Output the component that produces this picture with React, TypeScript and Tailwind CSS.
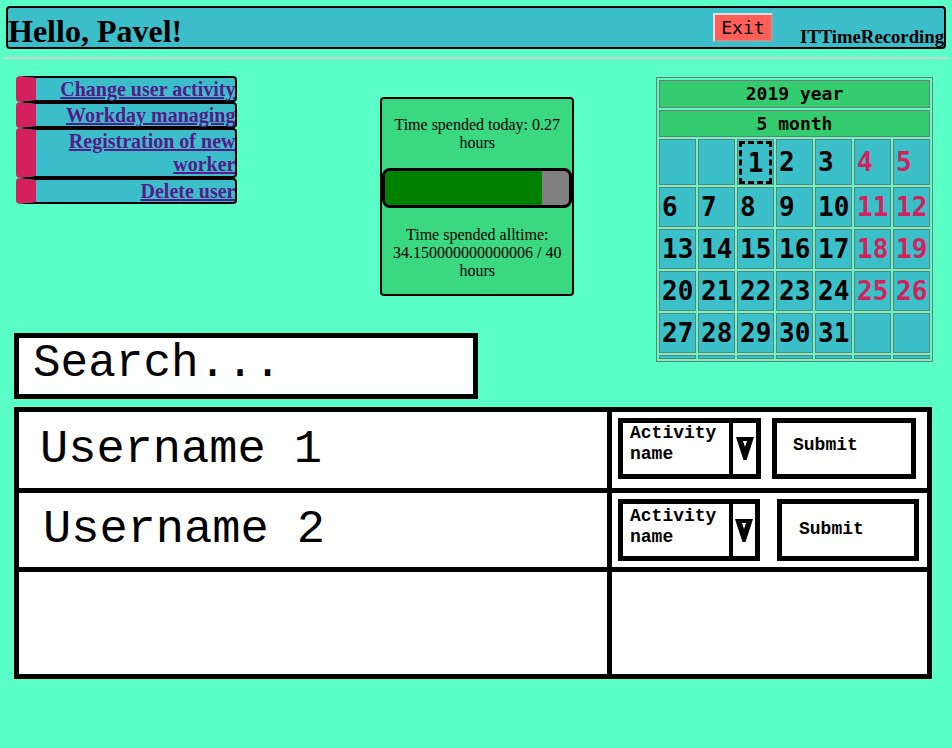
const serif = "font-['Liberation_Serif',serif]";
const mono = "font-['Liberation_Mono',monospace]";
const dmono = "font-['DejaVu_Sans_Mono',monospace]";

const menu = ["Change user activity", "Workday managing", "Registration of new worker", "Delete user"];

// calendar weeks, 0 = empty
const weeks = [
  [0, 0, 1, 2, 3, 4, 5],
  [6, 7, 8, 9, 10, 11, 12],
  [13, 14, 15, 16, 17, 18, 19],
  [20, 21, 22, 23, 24, 25, 26],
  [27, 28, 29, 30, 31, 0, 0],
];

const users = [
  { name: "Username 1", pad: "pl-[21px]", h: "h-[76px]", gap: "gap-[11px]", sel: "w-[143px] h-[61px]", selPt: "pt-0", sub: "w-[144px] h-[61px] pl-[16px] pt-[12px]" },
  { name: "Username 2", pad: "pl-[24px]", h: "h-[74px]", gap: "gap-[17px]", sel: "w-[142px] h-[62px]", selPt: "pt-[2px]", sub: "w-[142px] h-[62px] pl-[17px] pt-[15px]" },
];

const Arrow = () => (
  <svg width="18" height="23" viewBox="0 0 18 23">
    <path d="M0 0H18L10.5 23H7.5Z" fill="black" />
    <path d="M7 4H11L9 10Z" fill="white" />
  </svg>
);

const Calendar = () => {
  return (
    <table className={`border-separate border-spacing-[2px] border border-[#777] ${dmono}`}>
      <tbody>
        <tr>
          <td colSpan={7} className="p-0 border border-[#777] bg-[#33cc6e]">
            <div className="h-[26px] leading-[26px] text-center text-[18px] font-bold">2019 year</div>
          </td>
        </tr>
        <tr>
          <td colSpan={7} className="p-0 border border-[#777] bg-[#33cc6e]">
            <div className="h-[25px] leading-[25px] text-center text-[18px] font-bold">5 month</div>
          </td>
        </tr>
        {weeks.map((w, i) => (
          <tr key={i}>
            {w.map((d, j) => (
              <td key={j} className="p-0 border border-[#777] bg-[#3bbfc8]">
                <div
                  className={`w-[35px] ${i === 0 ? "h-[44px]" : "h-[38px]"} flex items-center text-[26px] font-bold ${
                    j >= 5 ? "text-[#d4215e]" : "text-black"
                  }`}
                >
                  {d === 1 ? (
                    <span className="ml-[1px] w-[33px] h-[43px] border-[3px] border-dashed border-black flex items-center justify-center pt-[3px]">
                      1
                    </span>
                  ) : d ? (
                    <span className="pl-[2px]">{d}</span>
                  ) : null}
                </div>
              </td>
            ))}
          </tr>
        ))}
        <tr>
          {Array.from({ length: 7 }).map((_, j) => (
            <td key={j} className="p-0 border border-[#777] bg-[#3bbfc8]">
              <div className="w-[35px] h-[2px]" />
            </td>
          ))}
        </tr>
      </tbody>
    </table>
  );
};

export default function App() {
  return (
    <div className="min-h-screen bg-[#5affc8] pt-[6px]">
      <header className="mx-[6px] h-[43px] border-2 border-black rounded-[4px] bg-[#3bbdca] flex items-end">
        <h1 className={`flex-1 ${serif} font-bold text-[32px] leading-none`}>Hello, Pavel!</h1>
        <button className={`self-center mr-[27px] w-[60px] h-[29px] bg-[#ff5f57] border-2 border-t-[#e0e0e0] border-l-[#e0e0e0] border-r-[#a0a0a0] border-b-[#a0a0a0] ${dmono} text-[18px] leading-none`}>
          Exit
        </button>
        <h3 className={`${serif} font-bold text-[18.72px] leading-[20px]`}>ITTimeRecording</h3>
      </header>
      <div className="mx-[4px] mt-[8px] h-[2px] bg-[#d0d0d0]" />

      <div className="flex pl-[14px]">
        <div className="w-[560px] flex flex-col">
          <div className="h-[274px] flex items-start">
            <nav className="ml-[2px] mt-[17px] w-[222px] flex flex-col">
              {menu.map((m, i) => (
                <a
                  key={m}
                  href="#"
                  className={`block border-2 border-black border-l-[20px] border-l-[#d4215e] rounded-[4px] bg-[#3bbdca] text-right ${serif} font-bold text-[20px] ${
                    i === 2 ? "leading-[23px]" : "leading-[22px]"
                  } text-[#551a8b] underline`}
                >
                  {m}
                </a>
              ))}
            </nav>
            <div className={`ml-[143px] mt-[38px] w-[194px] h-[199px] border-2 border-black rounded-[4px] bg-[#3ad880] ${serif} text-[16px] leading-[18px] text-center pt-[17px]`}>
              <p className="px-[8px]">Time spended today: 0.27 hours</p>
              <div className="mt-[16px] h-[40px] w-full border-[3px] border-black rounded-[8px] bg-[#808080] overflow-hidden">
                <div className="h-full bg-[#008000]" style={{ width: `${(34.15 / 40) * 100}%` }} />
              </div>
              <p className="mt-[18px] px-[8px]">Time spended alltime: 34.150000000000006 / 40 hours</p>
            </div>
          </div>
          <div className={`w-[464px] h-[66px] border-[5px] border-black bg-white flex items-center pl-[14px] pb-[3px] ${mono} text-[46px]`}>
            Search...
          </div>
        </div>
        <div className="ml-[82px] mt-[18px]">
          <Calendar />
        </div>
      </div>

      <div className={`ml-[14px] mt-[8px] w-[918px] border-[5px] border-black bg-white ${mono}`}>
        {users.map((u) => (
          <div key={u.name} className="grid grid-cols-[593px_1fr] border-b-[5px] border-black">
            <div className={`${u.h} border-r-[5px] border-black flex items-center ${u.pad} text-[47px]`}>{u.name}</div>
            <div className={`pl-[6px] pt-[6px] flex items-start ${u.gap}`}>
              <div className={`${u.sel} border-[5px] border-black flex`}>
                <div className={`w-[106px] pl-[7px] ${u.selPt} text-[18px] leading-[21px] font-bold`}>Activity name</div>
                <div className="flex-1 border-l-4 border-black flex items-center justify-center">
                  <Arrow />
                </div>
              </div>
              <div className={`${u.sub} border-[5px] border-black text-[18px] leading-[21px] font-bold`}>Submit</div>
            </div>
          </div>
        ))}
        <div className="grid grid-cols-[593px_1fr]">
          <div className="h-[102px] border-r-[5px] border-black" />
          <div />
        </div>
      </div>
    </div>
  );
}
